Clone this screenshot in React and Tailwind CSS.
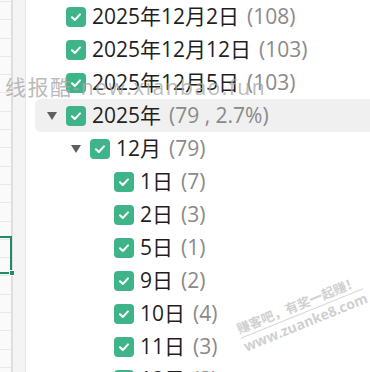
import React from "react";

const rows = [
  { level: 0, label: "2025年12月2日", count: "(108)", arrow: false },
  { level: 0, label: "2025年12月12日", count: "(103)", arrow: false },
  { level: 0, label: "2025年12月5日", count: "(103)", arrow: false },
  { level: 0, label: "2025年", count: "(79 , 2.7%)", arrow: true, active: true },
  { level: 1, label: "12月", count: "(79)", arrow: true },
  { level: 2, label: "1日", count: "(7)" },
  { level: 2, label: "2日", count: "(3)" },
  { level: 2, label: "5日", count: "(1)" },
  { level: 2, label: "9日", count: "(2)" },
  { level: 2, label: "10日", count: "(4)" },
  { level: 2, label: "11日", count: "(3)" },
  { level: 2, label: "12日", count: "(3)" },
];

const indent = ["pl-[12px]", "pl-[36px]", "pl-[60px]"];

function Check() {
  return (
    <span className="flex h-[20px] w-[20px] shrink-0 items-center justify-center rounded-[4px] bg-[#3fb489]">
      <svg width="14" height="14" viewBox="0 0 14 14" fill="none">
        <path d="M3 7.2 L5.8 10 L11 4.4" stroke="#fff" strokeWidth="2" strokeLinecap="round" strokeLinejoin="round" />
      </svg>
    </span>
  );
}

function Arrow() {
  return (
    <svg width="10" height="8" viewBox="0 0 10 8">
      <path d="M0 0 H10 L5 8 Z" fill="#5f5f5f" />
    </svg>
  );
}

export default function App() {
  const lines = Array.from({ length: 21 });
  return (
    <div
      className="relative flex h-[372px] w-[370px] overflow-hidden bg-white"
      style={{ fontFamily: '"Open Sans", "Noto Sans CJK SC", sans-serif' }}
    >
      {/* spreadsheet edge */}
      <div className="relative flex w-[11px] shrink-0 flex-col bg-[#fafafa] pt-[1px]">
        {lines.map((_, i) => (
          <div key={i} className="h-[18.3px] shrink-0 border-t border-[#e8e8e8]" />
        ))}
        <div className="absolute left-0 top-[236px] h-[38px] w-[12px] border-y-2 border-r-2 border-[#1f8c64]" />
        <div className="absolute left-[10px] top-[271px] h-[4px] w-[4px] bg-[#1f8c64] outline outline-1 outline-white" />
      </div>
      <div className="w-[2px] shrink-0 bg-[#dedede]" />
      <div className="w-[13px] shrink-0 border-r border-[#e6e6e6] bg-[#f4f4f4]" />

      {/* list */}
      <div className="flex flex-1 flex-col pl-[9px] pt-0">
        {rows.map((r, i) => (
          <div
            key={i}
            className={`flex h-[33px] shrink-0 items-center ${indent[r.level]} ${
              r.active ? "rounded-l-[6px] bg-[#f0f0f0]" : ""
            }`}
          >
            <span className="flex w-[19px] shrink-0 items-center">{r.arrow ? <Arrow /> : null}</span>
            <Check />
            <span className="ml-[6px] whitespace-nowrap text-[21px] leading-none text-[#1f1f1f]">
              {r.label}
              <span className="ml-[8px] text-[#8a8a8a]">{r.count}</span>
            </span>
          </div>
        ))}
      </div>

      {/* watermarks */}
      <div className="pointer-events-none absolute left-[5px] top-[77px] whitespace-nowrap text-[21px] leading-none tracking-[1.5px] text-[#a8a8a8]/80">
        线报酷-new.xianbao.fun
      </div>
      <div className="pointer-events-none absolute left-[236px] top-[296px] -rotate-[22deg] whitespace-nowrap text-[#d0d0d0]">
        <div className="border-b border-[#d8d8d8] text-[13px] leading-[17px] font-bold">赚客吧，有奖一起赚！</div>
        <div className="text-[14px] leading-[17px] font-bold">www.zuanke8.com</div>
      </div>
    </div>
  );
}
